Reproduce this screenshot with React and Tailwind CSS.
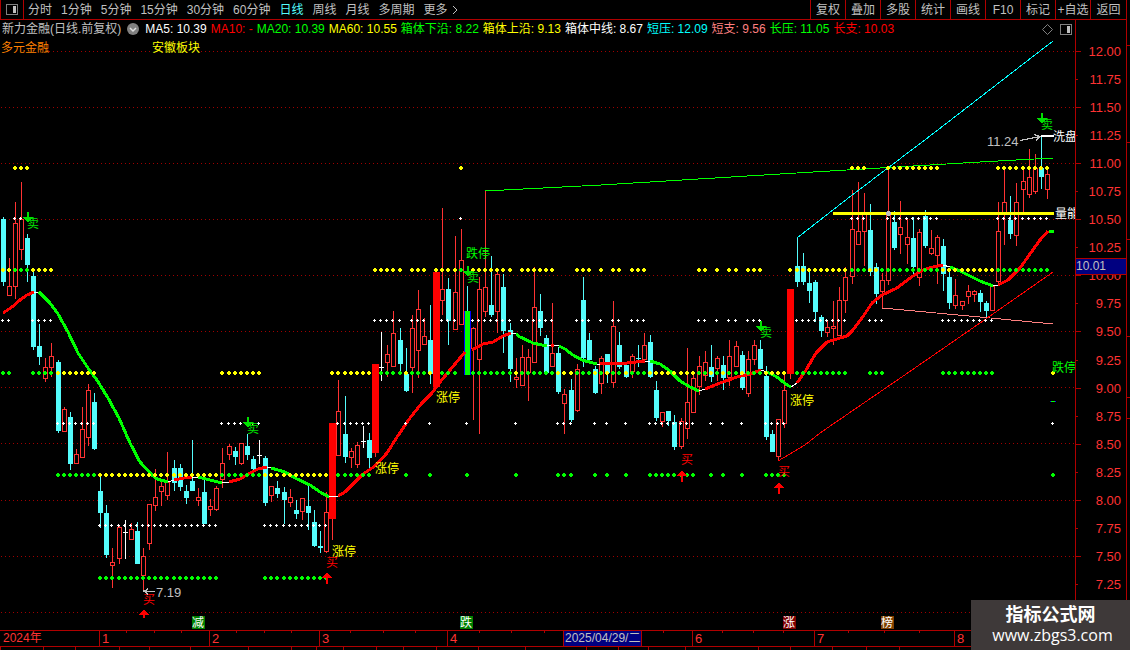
import React, { useState } from 'react';

const PERIODS = ['分时', '1分钟', '5分钟', '15分钟', '30分钟', '60分钟', '日线', '周线', '月线', '多周期'];

const TOOLS = ['复权', '叠加', '多股', '统计', '画线', 'F10', '标记', '+自选'];

const INDICATORS = [
  { label: 'MA5: 10.39', color: 'text-white' },
  { label: 'MA10: -', color: 'text-[#ff0000]' },
  { label: 'MA20: 10.39', color: 'text-[#00ff00]' },
  { label: 'MA60: 10.55', color: 'text-[#ffff00]' },
  { label: '箱体下沿: 8.22', color: 'text-[#00ff00]' },
  { label: '箱体上沿: 9.13', color: 'text-[#ffff00]' },
  { label: '箱体中线: 8.67', color: 'text-white' },
  { label: '短压: 12.09', color: 'text-[#00ffff]' },
  { label: '短支: 9.56', color: 'text-[#ff8080]' },
  { label: '长压: 11.05', color: 'text-[#00ff00]' },
  { label: '长支: 10.03', color: 'text-[#ff0000]' },
];

const PRICES = [
  '12.00', '11.75', '11.50', '11.25', '11.00', '10.75', '10.50', '10.25', '10.00', '9.75',
  '9.50', '9.25', '9.00', '8.75', '8.50', '8.25', '8.00', '7.75', '7.50', '7.25',
];

const MONTHS = [
  { label: '2024年', span: 99, ticks: 0 },
  { label: '1', span: 110, ticks: 3 },
  { label: '2', span: 110, ticks: 3 },
  { label: '3', span: 128, ticks: 3 },
  { label: '4', span: 129, ticks: 3 },
  { label: '', span: 116, ticks: 3 },
  { label: '6', span: 122, ticks: 3 },
  { label: '7', span: 140, ticks: 3 },
  { label: '8', span: 172, ticks: 3 },
];

// [x, high, bodyTop, bodyBottom, low, type]
// u = up, d = down, w = doji, z = limit up, b = limit down
const CANDLES = [
  [3, 217, 219, 282, 286, 'd'], [9, 258, 286, 296, 296, 'u'], [15, 202, 223, 287, 299, 'u'],
  [21, 182, 219, 250, 260, 'u'], [27, 234, 238, 265, 282, 'd'], [33, 272, 276, 347, 350, 'd'],
  [39, 324, 346, 357, 365, 'd'], [45, 358, 367, 379, 382, 'u'], [51, 343, 356, 368, 377, 'u'],
  [58, 360, 362, 431, 433, 'd'], [64, 407, 409, 432, 432, 'u'], [70, 412, 417, 464, 470, 'd'],
  [76, 449, 454, 464, 464, 'u'], [82, 407, 429, 458, 458, 'u'], [88, 384, 390, 438, 446, 'u'],
  [94, 393, 402, 449, 450, 'd'], [100, 476, 491, 513, 528, 'd'], [106, 505, 513, 555, 558, 'd'],
  [112, 548, 562, 566, 588, 'u'], [119, 525, 527, 559, 564, 'u'], [125, 520, 532, 533, 559, 'w'],
  [131, 523, 529, 540, 540, 'u'], [137, 522, 531, 564, 564, 'd'], [143, 548, 556, 576, 591, 'u'],
  [149, 504, 504, 544, 550, 'u'], [155, 469, 497, 506, 511, 'u'], [161, 479, 486, 492, 506, 'u'],
  [167, 452, 482, 496, 500, 'u'], [174, 460, 468, 483, 491, 'd'], [180, 464, 468, 487, 491, 'd'],
  [186, 485, 491, 498, 504, 'd'], [192, 440, 481, 491, 491, 'd'], [198, 488, 497, 501, 506, 'u'],
  [204, 480, 492, 524, 524, 'd'], [210, 499, 506, 510, 516, 'u'], [216, 486, 488, 510, 511, 'u'],
  [222, 448, 463, 480, 488, 'u'], [229, 444, 446, 455, 460, 'u'], [235, 447, 451, 457, 465, 'd'],
  [241, 443, 443, 464, 465, 'u'], [247, 434, 446, 455, 460, 'd'], [253, 456, 459, 469, 472, 'd'],
  [259, 440, 455, 456, 464, 'w'], [265, 456, 458, 503, 506, 'd'], [271, 486, 486, 496, 502, 'u'],
  [277, 481, 488, 494, 498, 'd'], [284, 487, 492, 500, 524, 'd'], [290, 489, 497, 503, 507, 'u'],
  [296, 500, 510, 514, 519, 'd'], [302, 498, 498, 512, 520, 'u'], [308, 486, 506, 513, 530, 'd'],
  [314, 510, 522, 546, 547, 'd'], [320, 531, 546, 548, 553, 'd'], [326, 492, 512, 552, 553, 'u'],
  [332, 423, 423, 519, 540, 'z'], [338, 380, 411, 456, 456, 'u'], [345, 396, 434, 457, 463, 'd'],
  [351, 448, 451, 458, 468, 'u'], [357, 442, 445, 465, 468, 'u'], [363, 426, 441, 442, 448, 'w'],
  [369, 433, 440, 458, 468, 'd'], [375, 364, 364, 453, 457, 'z'], [381, 332, 367, 368, 381, 'w'],
  [387, 345, 354, 363, 377, 'u'], [393, 311, 333, 367, 367, 'u'], [400, 328, 340, 364, 374, 'd'],
  [406, 348, 374, 391, 392, 'd'], [412, 315, 328, 368, 393, 'u'], [418, 290, 309, 351, 378, 'u'],
  [424, 318, 336, 345, 345, 'u'], [430, 305, 340, 374, 384, 'd'], [436, 272, 272, 387, 387, 'z'],
  [442, 208, 289, 301, 315, 'u'], [448, 278, 289, 321, 345, 'd'], [455, 236, 292, 330, 330, 'u'],
  [461, 229, 260, 325, 325, 'u'], [467, 286, 311, 375, 375, 'b'], [473, 327, 328, 349, 420, 'u'],
  [479, 277, 289, 360, 434, 'u'], [485, 191, 287, 312, 317, 'u'], [491, 256, 305, 315, 317, 'd'],
  [497, 270, 274, 312, 333, 'u'], [503, 274, 287, 331, 353, 'd'], [510, 323, 330, 369, 382, 'd'],
  [516, 358, 377, 380, 388, 'u'], [522, 345, 357, 386, 386, 'u'], [528, 349, 357, 373, 401, 'u'],
  [534, 267, 307, 363, 363, 'u'], [540, 294, 311, 328, 336, 'd'], [546, 335, 338, 373, 373, 'd'],
  [552, 303, 353, 367, 367, 'u'], [558, 347, 353, 392, 394, 'd'], [564, 389, 394, 404, 434, 'u'],
  [571, 379, 390, 420, 422, 'd'], [577, 364, 369, 411, 412, 'u'], [583, 277, 300, 358, 367, 'd'],
  [589, 333, 340, 360, 363, 'd'], [595, 366, 369, 393, 394, 'd'], [601, 356, 358, 384, 394, 'u'],
  [607, 354, 354, 373, 383, 'd'], [613, 301, 326, 383, 388, 'u'], [619, 332, 345, 367, 369, 'd'],
  [626, 365, 365, 377, 378, 'd'], [632, 354, 356, 372, 378, 'u'], [638, 345, 358, 359, 367, 'd'],
  [644, 333, 345, 360, 360, 'u'], [650, 335, 342, 377, 378, 'd'], [656, 381, 390, 418, 421, 'd'],
  [662, 412, 412, 422, 427, 'u'], [668, 411, 411, 421, 426, 'd'], [674, 415, 422, 447, 450, 'd'],
  [681, 418, 421, 447, 449, 'u'], [687, 348, 402, 429, 439, 'u'], [693, 372, 378, 413, 413, 'u'],
  [699, 356, 366, 387, 395, 'u'], [705, 351, 362, 376, 381, 'u'], [711, 345, 367, 377, 382, 'd'],
  [717, 356, 358, 369, 381, 'u'], [723, 356, 365, 378, 390, 'd'], [729, 340, 356, 378, 386, 'u'],
  [736, 341, 346, 367, 367, 'u'], [742, 351, 355, 388, 390, 'd'], [748, 351, 359, 394, 397, 'u'],
  [754, 340, 345, 360, 365, 'u'], [760, 340, 349, 369, 369, 'd'], [766, 366, 376, 437, 440, 'd'],
  [772, 430, 434, 452, 452, 'd'], [778, 419, 419, 457, 461, 'u'], [784, 375, 390, 424, 428, 'u'],
  [790, 289, 289, 374, 379, 'z'], [797, 238, 266, 282, 287, 'd'], [803, 253, 266, 282, 285, 'd'],
  [809, 272, 283, 291, 303, 'd'], [815, 280, 282, 312, 322, 'd'], [821, 315, 317, 331, 337, 'd'],
  [827, 320, 327, 333, 337, 'u'], [833, 301, 326, 329, 345, 'u'], [839, 287, 300, 336, 336, 'u'],
  [845, 267, 277, 301, 313, 'u'], [852, 190, 229, 277, 284, 'u'], [858, 182, 231, 245, 245, 'u'],
  [864, 193, 213, 232, 266, 'u'], [870, 204, 230, 272, 276, 'd'], [876, 263, 267, 294, 304, 'd'],
  [882, 273, 280, 292, 308, 'u'], [888, 169, 213, 281, 285, 'u'], [894, 211, 222, 248, 250, 'd'],
  [900, 201, 227, 235, 254, 'u'], [907, 219, 237, 245, 264, 'u'], [913, 217, 238, 267, 274, 'd'],
  [919, 229, 232, 278, 286, 'u'], [925, 210, 216, 246, 248, 'd'], [931, 230, 248, 254, 255, 'u'],
  [937, 235, 237, 256, 284, 'u'], [943, 239, 246, 274, 291, 'd'], [949, 270, 277, 303, 309, 'd'],
  [955, 279, 295, 306, 309, 'u'], [962, 301, 301, 306, 310, 'u'], [968, 285, 291, 297, 304, 'u'],
  [974, 290, 291, 295, 302, 'u'], [980, 290, 293, 302, 312, 'd'], [986, 301, 303, 311, 318, 'd'],
  [992, 286, 286, 311, 311, 'u'], [998, 202, 231, 282, 285, 'u'], [1004, 168, 202, 213, 245, 'u'],
  [1010, 196, 220, 234, 239, 'd'], [1016, 183, 202, 236, 246, 'u'], [1023, 169, 181, 190, 212, 'u'],
  [1029, 149, 177, 195, 198, 'u'], [1035, 154, 168, 192, 194, 'u'], [1041, 136, 168, 177, 189, 'd'],
  [1047, 168, 174, 190, 199, 'u'],
];

const XS = [...CANDLES.map((c) => c[0]), 1053];

const YELLOW_ROWS = [
  [168, [[15, 27], [461, 461], [852, 864], [888, 937], [998, 1047]]],
  [270, [[3, 9], [33, 51], [375, 400], [412, 424], [436, 455], [473, 510], [522, 552], [577, 589], [601, 601], [613, 619], [632, 644], [699, 705], [717, 717], [729, 736], [748, 760], [790, 845], [870, 876], [943, 992]]],
  [373, [[58, 94], [222, 259], [332, 369], [406, 406], [430, 430], [516, 516], [558, 571], [595, 595], [607, 607], [626, 626], [650, 693], [711, 711], [723, 723], [742, 742], [766, 784], [1053, 1053]]],
  [475, [[100, 216], [265, 326]]],
];

const GREEN_ROWS = [
  [270, [[15, 27], [461, 461], [852, 864], [882, 937], [998, 1047]]],
  [373, [[3, 9], [33, 51], [381, 400], [412, 424], [442, 455], [473, 510], [522, 552], [577, 589], [601, 601], [613, 619], [632, 644], [699, 705], [717, 717], [729, 736], [748, 760], [797, 845], [870, 882], [943, 992]]],
  [475, [[58, 94], [222, 259], [338, 369], [406, 406], [430, 430], [467, 467], [516, 516], [558, 571], [595, 595], [607, 607], [626, 626], [650, 693], [711, 711], [723, 723], [742, 742], [766, 784], [1053, 1053]]],
  [578, [[100, 216], [265, 326]]],
];

const WHITE_ROWS = [
  [218, [[15, 27], [461, 461], [852, 864], [888, 937], [998, 1047]]],
  [320, [[3, 9], [33, 51], [375, 400], [412, 424], [442, 455], [473, 510], [522, 552], [577, 589], [601, 601], [613, 619], [632, 644], [699, 705], [717, 717], [729, 736], [748, 760], [797, 845], [870, 882], [943, 992]]],
  [423, [[58, 94], [222, 259], [338, 369], [406, 406], [430, 430], [467, 467], [516, 516], [558, 571], [595, 595], [607, 607], [626, 626], [650, 693], [711, 711], [723, 723], [742, 742], [766, 784], [1053, 1053]]],
  [525, [[100, 216], [265, 326]]],
];

const TREND_WHITE = '34,292 39,292 M168,482 L174,480 M192,477 L198,477 M222,483 L229,482 M267,467 L271,468 M329,497 L338,496 M511,333 L516,334 M547,345 L559,345 M597,364 L600,364 M645,361 L650,361 M699,391 L705,389 M761,370 L767,372 M791,387 L797,383 M943,265 L950,267 M993,286 L998,285';

const TREND_RED = [
  '3,313 12,307 20,300 27,295 34,292',
  '174,480 184,478 192,477',
  '229,482 240,479 250,473 258,469 267,467',
  '338,496 345,492 363,474 375,466 387,453 397,437 410,418 422,403 432,393 440,382 450,370 460,358 465,352',
  '472,350 483,344 493,342 503,336 511,333',
  '551,345 554,345',
  '600,364 627,363 645,361',
  '705,389 720,383 737,377 750,374 761,370',
  '797,383 806,370 816,353 827,342 837,339 847,336 853,330 862,318 872,303 882,295 897,288 913,276 923,270 933,267 943,265',
  '998,285 1008,280 1020,268 1030,254 1040,240 1048,231',
];

const TREND_GREEN = [
  '39,292 50,303 58,314 68,332 78,353 88,368 97,380 108,398 119,418 130,443 140,462 152,475 157,479 168,482',
  '198,477 210,480 222,483',
  '271,468 285,472 297,479 310,485 320,492 329,497',
  '516,334 520,337 533,343 542,345 547,345',
  '559,346 565,349 573,355 582,360 593,363 597,364',
  '650,361 660,364 670,371 680,381 690,387 699,391',
  '767,372 777,377 787,385 791,387',
  '950,267 960,271 980,281 993,286',
  '1049,231 1054,231',
];

const SELLS = [[28, 212], [248, 417], [468, 266], [761, 321], [1042, 113]];

// arrow x, arrow tip, arrow length, text x, text baseline
const BUYS = [
  [144, 609, 9, 143, 604],
  [327, 572, 12, 326, 567],
  [682, 470, 12, 681, 464],
  [779, 482, 12, 778, 476],
];

const LIMIT_UPS = [[332, 556], [375, 473], [436, 402], [790, 405]];

const EVENTS = [
  { x: 192, text: '减', fill: '#008000' },
  { x: 460, text: '跌', fill: '#008000' },
  { x: 783, text: '涨', fill: '#800000' },
  { x: 881, text: '榜', fill: '#804000' },
];

const GRID = [51, 107, 163, 219, 275, 331, 387, 443, 500, 556, 612];

const expand = (rows) =>
  rows.flatMap(([y, ranges]) => ranges.flatMap(([a, b]) => XS.filter((x) => x >= a && x <= b).map((x) => [x, y])));

const dotPath = (rows) => expand(rows).map(([x, y]) => `M${x - 1} ${y - 2}h2v1h1v2h-1v1h-2v-1h-1v-2h1z`).join('');

const crossPath = (rows) => expand(rows).map(([x, y]) => `M${x - 1} ${y - 1}h1v1h1v1h-1v1h-1v-1h-1v-1h1z`).join('');

const Candle = ({ data }) => {
  const [x, high, top, bottom, low, type] = data;
  if (type === 'u') {
    return (
      <g>
        <path d={`M${x} ${high}h1V${top}h-1zM${x} ${bottom}h1V${low}h-1z`} fill="#ff3232" />
        <rect x={x - 1.5} y={top + 0.5} width={4} height={Math.max(bottom - top - 1, 1)} fill="#000" stroke="#ff3232" />
      </g>
    );
  }
  const fill = type === 'd' || type === 'b' ? '#54fcfc' : type === 'w' ? '#fff' : '#ff3232';
  return (
    <g fill={fill}>
      <rect x={x} y={high} width={1} height={low - high} />
      {type === 'z' && <rect x={x - 3} y={top} width={7} height={bottom - top} fill="#f00" />}
      {type === 'b' && <rect x={x - 3} y={top} width={7} height={bottom - top} fill="#00f" />}
      {type === 'b' && <rect x={x - 2} y={top} width={5} height={bottom - top} fill="#0f0" />}
      {(type === 'd' || type === 'w') && <rect x={x - 2} y={top} width={5} height={bottom - top} />}
    </g>
  );
};

const Chart = () => (
  <svg viewBox="0 38 1075 592" className="block w-full" shapeRendering="crispEdges" fontSize="12" role="img" aria-label="日线K线图">
    {/* Grid */}
    {GRID.map((y) => (
      <path key={y} d={`M1 ${y}.5H1075`} stroke="#a00000" strokeDasharray="1 3" />
    ))}

    {/* Candles */}
    {CANDLES.map((c) => (
      <Candle key={c[0]} data={c} />
    ))}

    {/* Pressure and support lines */}
    <g fill="none">
      <polyline points="485,191 601,185 780,174 980,162 1053,158" stroke="#00ff00" />
      <polyline points="797,238 847,199 930,136 1053,41" stroke="#00ffff" />
      <polyline points="882,308 980,317 1053,324" stroke="#ff8080" />
      <polyline points="778,461 805,445 820,433 912,370 980,323 1053,272" stroke="#ff0000" />
    </g>

    {/* Trend */}
    <g fill="none" strokeWidth="3">
      <path d={`M${TREND_WHITE}`} stroke="#fff" strokeWidth="1" />
      {TREND_RED.map((p) => (
        <polyline key={p} points={p} stroke="#f00" />
      ))}
      {TREND_GREEN.map((p) => (
        <polyline key={p} points={p} stroke="#0f0" />
      ))}
    </g>

    {/* Box levels */}
    <path d={dotPath(GREEN_ROWS)} fill="#0f0" />
    <path d={dotPath(YELLOW_ROWS)} fill="#ff0" />
    <path d={crossPath(WHITE_ROWS)} fill="#fff" />
    <rect x="833" y="212" width="221" height="3" fill="#ff0" />
    <path d="M887 211h3v1h1v3h-1v1h-3v-1h-1v-3h1z" fill="#c0c0c0" />
    <rect x="1041" y="135" width="13" height="2" fill="#fff" />
    <rect x="1050" y="401" width="6" height="1" fill="#00f" />
    <rect x="1051" y="401" width="4" height="1" fill="#0f0" />

    {/* Signals */}
    {SELLS.map(([x, y]) => (
      <g key={x} fill="#00e000">
        <path d={`M${x - 1} ${y}h2v5h4l-5 6l-5 -6h4z`} />
        <text x={x - 1} y={y + 16}>卖</text>
      </g>
    ))}
    {BUYS.map(([x, y, len, tx, ty]) => (
      <g key={x} fill="#f00">
        <path d={`M${x} ${y}l5 6h-4v${len - 6}h-2v-${len - 6}h-4z`} />
        <text x={tx} y={ty}>买</text>
      </g>
    ))}
    {LIMIT_UPS.map(([x, y]) => (
      <text key={x} x={x} y={y} fill="#ff0">涨停</text>
    ))}
    <text x="466" y="258" fill="#0f0">跌停</text>
    <text x="1052" y="372" fill="#0f0">跌停</text>
    <text x="1053" y="141" fill="#fff">洗盘</text>
    <text x="1055" y="218" fill="#fff">量能</text>

    {/* High and low */}
    <g fill="#c0c0c0" fontSize="13">
      <text x="156" y="597">7.19</text>
      <text x="987" y="146">11.24</text>
    </g>
    <path d="M145 591.5H155M148 588.5L145 591.5L148 594.5" fill="none" stroke="#c0c0c0" />
    <path d="M1020 140.5L1040 136.5M1034 134.5L1040 136.5L1036 140.5" fill="none" stroke="#c0c0c0" />
    <rect x="143" y="590" width="2" height="2" fill="#c0c0c0" />

    {EVENTS.map((e) => (
      <g key={e.text}>
        <rect x={e.x} y="616" width="13" height="13" fill={e.fill} />
        <text x={e.x} y="627" fill="#fff">{e.text}</text>
      </g>
    ))}
  </svg>
);

const PanelIcon = () => (
  <svg width="12" height="11" viewBox="0 0 12 11" shapeRendering="crispEdges">
    <rect x="0.5" y="0.5" width="11" height="10" fill="none" stroke="#808080" />
    <rect x="7" y="2" width="3" height="7" fill="#c0c0c0" />
  </svg>
);

const Toolbar = ({ period, setPeriod }) => (
  <nav className="flex h-5 items-stretch whitespace-nowrap border-b border-l border-[#b00000]">
    <button className="flex w-[23px] items-center justify-center border-r border-[#b00000]" aria-label="侧栏">
      <PanelIcon />
    </button>
    <div className="flex flex-1 items-center gap-[9px] pl-1">
      {PERIODS.map((p) => (
        <button key={p} onClick={() => setPeriod(p)} className={p === period ? 'text-[#54fcfc]' : ''}>
          {p}
        </button>
      ))}
      <button className="flex items-center gap-1">
        更多
        <svg width="6" height="10" viewBox="0 0 6 10" fill="none" stroke="#c0c0c0">
          <path d="M1 1L5 5L1 9" />
        </svg>
      </button>
    </div>
    <div className="flex">
      {TOOLS.map((t) => (
        <button key={t} className="w-[35px] border-l border-[#b00000]">
          {t}
        </button>
      ))}
      <button className="w-9 border-l border-[#b00000]">返回</button>
    </div>
  </nav>
);

const Legend = () => (
  <div className="flex h-[18px] items-center whitespace-nowrap pl-0.5">
    <span className="text-[#c0c0c0]">新力金融(日线.前复权)</span>
    <button className="mx-[5px] flex" aria-label="展开">
      <svg width="14" height="14" viewBox="0 0 14 14">
        <circle cx="7" cy="7" r="6" fill="#808080" />
        <path d="M4 6L7 9L10 6" fill="none" stroke="#e0e0e0" strokeWidth="1.5" />
      </svg>
    </button>
    <div className="flex flex-1 gap-1">
      {INDICATORS.map((i) => (
        <span key={i.label} className={i.color}>{i.label}</span>
      ))}
    </div>
    <div className="flex items-center gap-[7px] pr-[3px]">
      <svg width="11" height="11" viewBox="0 0 11 11" fill="none" stroke="#808080">
        <path d="M5.5 0.5L10.5 5.5L5.5 10.5L0.5 5.5Z" />
      </svg>
      <PanelIcon />
    </div>
  </div>
);

const PriceAxis = () => (
  <div className="relative flex w-[51px] flex-col border-l border-[#b00000] pb-[31px] pt-[17px] text-[13px] text-[#ff3232]">
    {PRICES.map((p, i) => (
      <div key={p} className="flex flex-1 items-center justify-between pr-[5px]">
        <span className={i % 2 === 0 ? 'h-px w-[5px] bg-[#b00000]' : 'h-px w-0.5 bg-[#b00000]'} />
        <span className="leading-none">{p}</span>
      </div>
    ))}
    {/* Crosshair price */}
    <div className="absolute left-0 right-0 top-[238px] h-[17px] border-y border-[#b00000] bg-[#000080] text-xs leading-[15px] text-[#c0c0c0]">
      10.01
    </div>
  </div>
);

const TimeAxis = () => (
  <div className="relative flex h-[17px] border-y border-[#b00000] text-[13px] leading-[15px] text-[#ff3232]">
    {MONTHS.map((m, i) => (
      <div key={i} className="relative min-w-0 basis-0" style={{ flexGrow: m.span }}>
        <div className={i === 0 ? 'pl-[3px] text-xs leading-[15px]' : 'h-full border-l border-[#b00000] pl-0.5'}>
          {m.label}
        </div>
        <div className="absolute inset-x-0 top-0 flex justify-evenly">
          {Array.from({ length: m.ticks }, (_, k) => (
            <span key={k} className="h-0.5 w-px bg-[#b00000]" />
          ))}
        </div>
      </div>
    ))}
    <div className="absolute inset-y-0 left-1/2 w-[79px] border-x border-[#b00000] bg-[#000080] pl-px text-xs leading-[15px] text-[#c0c0c0]">
      2025/04/29/二
    </div>
  </div>
);

// Top edge of the next panel's tabs
const NEXT_TABS = [42, 31, 42, 29, 40, 57, 41, 24, 26, 32, 26, 32, 40, 46, 60, 31, 29, 35, 72, 31, 41, 32, 32];

const App = () => {
  const [period, setPeriod] = useState('日线');

  return (
    <div className="relative flex min-h-screen overflow-hidden bg-black font-['Liberation_Sans','Noto_Sans_CJK_SC',sans-serif] text-xs text-[#c0c0c0]">
      <main className="flex min-w-0 flex-1 flex-col">
        <Toolbar period={period} setPeriod={setPeriod} />
        <div className="flex">
          <section className="relative min-w-0 flex-1">
            <Legend />
            <Chart />
            <div className="absolute left-px top-5 flex w-[199px] justify-between">
              <a href="#sector" className="bg-black text-[#ff8000]">多元金融</a>
              <a href="#region" className="bg-black text-[#ffff00]">安徽板块</a>
            </div>
          </section>
          <PriceAxis />
        </div>
        <TimeAxis />
        <div className="flex h-[3px]">
          {NEXT_TABS.map((w, i) => (
            <span key={i} className="basis-0 border-l border-[#b00000]" style={{ flexGrow: w }} />
          ))}
          <span className="basis-0 border-l border-[#b00000]" style={{ flexGrow: 225 }} />
        </div>
      </main>

      {/* Edge of the quote panel */}
      <aside className="flex w-1 flex-col border-l border-[#b00000]">
        <span className="h-[46px] border-b border-[#b00000]" />
        <span className="h-[97px] border-b border-[#b00000]" />
        <span className="h-[97px] border-b border-[#b00000]" />
        <span className="h-[97px] border-b border-[#b00000]" />
        <span className="h-[61px] border-b border-[#b00000]" />
        <span className="h-[21px] border-b border-[#b00000]" />
      </aside>

      <footer className="absolute bottom-0 right-0 flex h-[50px] w-[159px] flex-col items-center justify-center bg-[#3e3939] text-white">
        <strong className="text-lg leading-5">指标公式网</strong>
        <a href="#home" className="pl-1 font-['Open_Sans',sans-serif] text-base leading-5">www.zbgs3.com</a>
      </footer>
    </div>
  );
};

export default App;
